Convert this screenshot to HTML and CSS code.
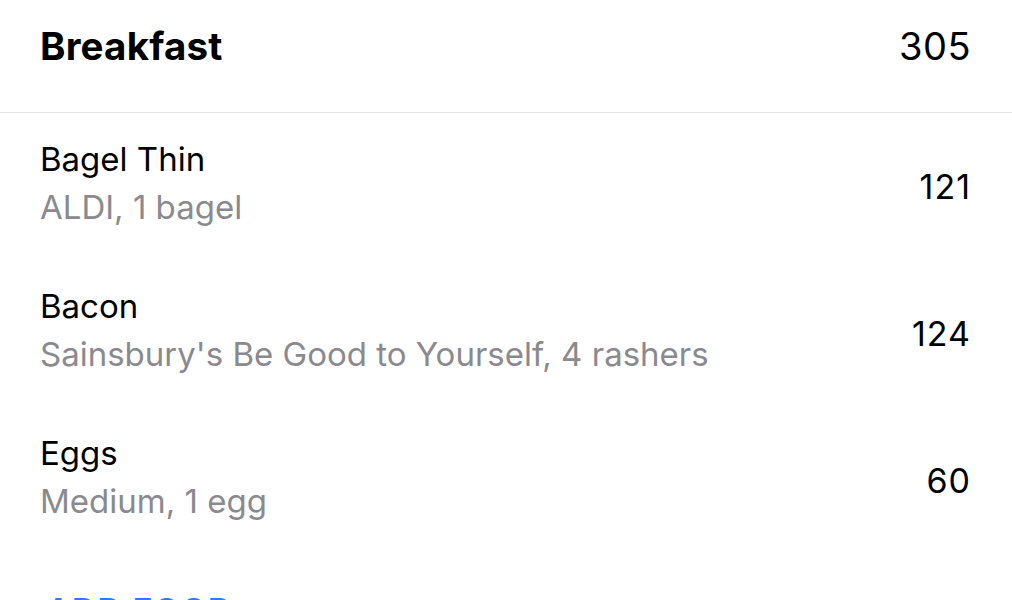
FILE: index.html
```html
<!DOCTYPE html>
<html>
<head>
<meta charset="utf-8">
<link rel="stylesheet" href="styles.css">
</head>
<body>
<div class="meal">
  <div class="meal-header">
    <span class="meal-title">Breakfast</span>
    <span class="meal-total">305</span>
  </div>
  <div class="food-list">
    <div class="food-row">
      <div class="food-info">
        <div class="food-name">Bagel Thin</div>
        <div class="food-detail">ALDI, 1 bagel</div>
      </div>
      <div class="food-cal">121</div>
    </div>
    <div class="food-row">
      <div class="food-info">
        <div class="food-name">Bacon</div>
        <div class="food-detail">Sainsbury's Be Good to Yourself, 4 rashers</div>
      </div>
      <div class="food-cal">124</div>
    </div>
    <div class="food-row">
      <div class="food-info">
        <div class="food-name">Eggs</div>
        <div class="food-detail">Medium, 1 egg</div>
      </div>
      <div class="food-cal">60</div>
    </div>
  </div>
  <div class="add-food">ADD FOOD</div>
</div>
</body>
</html>
```
FILE: styles.css
```css
html, body {
  margin: 0;
  padding: 0;
  background: #ffffff;
}
body {
  font-family: Inter, "Noto Sans", "Liberation Sans", sans-serif;
  color: #000;
  overflow: hidden;
  height: 600px;
}
.meal {
  display: flex;
  flex-direction: column;
  height: 600px;
  overflow: hidden;
}
.meal-header {
  flex: none;
  height: 113px;
  box-sizing: border-box;
  border-bottom: 1px solid #e3e3e5;
  display: flex;
  align-items: center;
  justify-content: space-between;
  padding: 0 41px 20px 40px;
}
.meal-title {
  font-size: 38.5px;
  font-weight: 700;
  letter-spacing: 0.2px;
}
.meal-total {
  font-size: 38px;
  font-weight: 400;
  letter-spacing: 0.5px;
}
.food-list {
  flex: none;
  display: flex;
  flex-direction: column;
}
.food-row {
  height: 147px;
  display: flex;
  align-items: center;
  justify-content: space-between;
  padding: 0 41px 0 40px;
}
.food-info {
  display: flex;
  flex-direction: column;
  padding-bottom: 7px;
}
.food-name {
  font-size: 33px;
  line-height: 48px;
}
.food-detail {
  font-size: 33px;
  line-height: 48px;
  color: #8a8a8e;
}
.food-cal {
  font-size: 34px;
  letter-spacing: 1px;
}
.add-food {
  flex: none;
  padding: 36px 0 0 46px;
  font-size: 34px;
  line-height: 42px;
  font-weight: 600;
  color: #3478f6;
  letter-spacing: 1px;
  white-space: nowrap;
}
```
